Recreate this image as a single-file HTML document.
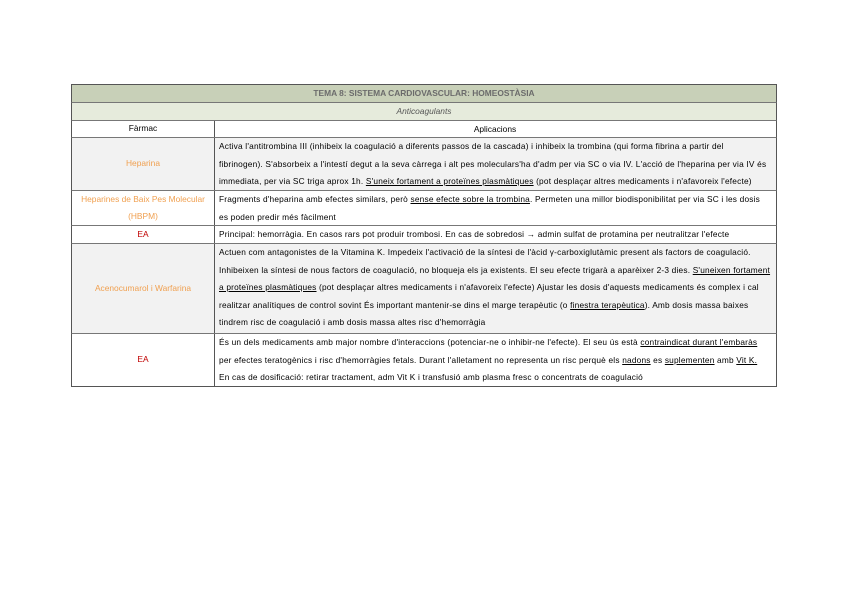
<!DOCTYPE html>
<html><head><meta charset="utf-8"><style>
body{margin:0;width:848px;height:599px;background:#fff;font-family:"Liberation Sans",sans-serif;position:relative;overflow:hidden}
.r{position:absolute;left:71px;width:706px;border-top:1px solid #777;border-left:1px solid #555;border-right:1px solid #555;box-sizing:border-box}
.c1{position:absolute;left:0;top:0;bottom:0;width:142px;border-right:1px solid #555;display:flex;align-items:center;justify-content:center;font-size:8.4px;text-align:center;line-height:17.5px}
.c2{position:absolute;left:147px;top:0;right:2px;font-size:8.3px;line-height:17.6px;color:#000;white-space:nowrap;letter-spacing:0.2px}
.o{color:#f0a050}.red{color:#c00000}
u{text-decoration:underline}
</style></head><body>
<div class="r" style="top:84px;height:18px;background:#c8d0b8;border-top:1px solid #555;font-size:8.4px;font-weight:bold;color:#6b6b6b;text-align:center;line-height:16px">TEMA 8: SISTEMA CARDIOVASCULAR: HOMEOSTÀSIA</div>
<div class="r" style="top:102px;height:18px;background:#e6ebdc;font-size:8.4px;font-style:italic;color:#555;text-align:center;line-height:16px">Anticoagulants</div>
<div class="r" style="top:120px;height:17px;background:#fff;font-size:8.4px;line-height:16px"><div class="c1">Fàrmac</div><div style="position:absolute;left:142px;right:0;text-align:center">Aplicacions</div></div>
<div class="r" style="top:137px;height:53px;background:#f2f2f2"><div class="c1 o">Heparina</div><div class="c2">Activa l'antitrombina III (inhibeix la coagulació a diferents passos de la cascada) i inhibeix la trombina (qui forma fibrina a partir del<br>fibrinogen). S'absorbeix a l'intestí degut a la seva càrrega i alt pes moleculars'ha d'adm per via SC o via IV. L'acció de l'heparina per via IV és<br>immediata, per via SC triga aprox 1h. <u>S'uneix fortament a proteïnes plasmàtiques</u> (pot desplaçar altres medicaments i n'afavoreix l'efecte)</div></div>
<div class="r" style="top:190px;height:35px;background:#fff"><div class="c1 o">Heparines de Baix Pes Molecular<br>(HBPM)</div><div class="c2">Fragments d'heparina amb efectes similars, però <u>sense efecte sobre la trombina</u>. Permeten una millor biodisponibilitat per via SC i les dosis<br>es poden predir més fàcilment</div></div>
<div class="r" style="top:225px;height:18px;background:#fff"><div class="c1 red">EA</div><div class="c2">Principal: hemorràgia. En casos rars pot produir trombosi. En cas de sobredosi → admin sulfat de protamina per neutralitzar l'efecte</div></div>
<div class="r" style="top:243px;height:90px;background:#f2f2f2"><div class="c1 o">Acenocumarol i Warfarina</div><div class="c2">Actuen com antagonistes de la Vitamina K. Impedeix l'activació de la síntesi de l'àcid γ-carboxiglutàmic present als factors de coagulació.<br>Inhibeixen la síntesi de nous factors de coagulació, no bloqueja els ja existents. El seu efecte trigarà a aparèixer 2-3 dies. <u>S'uneixen fortament</u><br><u>a proteïnes plasmàtiques</u> (pot desplaçar altres medicaments i n'afavoreix l'efecte) Ajustar les dosis d'aquests medicaments és complex i cal<br>realitzar analítiques de control sovint És important mantenir-se dins el marge terapèutic (o <u>finestra terapèutica</u>). Amb dosis massa baixes<br>tindrem risc de coagulació i amb dosis massa altes risc d'hemorràgia</div></div>
<div class="r" style="top:333px;height:54px;background:#fff;border-bottom:1px solid #555"><div class="c1 red">EA</div><div class="c2">És un dels medicaments amb major nombre d'interaccions (potenciar-ne o inhibir-ne l'efecte). El seu ús està <u>contraindicat durant l'embaràs</u><br>per efectes teratogènics i risc d'hemorràgies fetals. Durant l'alletament no representa un risc perquè els <u>nadons</u> es <u>suplementen</u> amb <u>Vit K.</u><br>En cas de dosificació: retirar tractament, adm Vit K i transfusió amb plasma fresc o concentrats de coagulació</div></div>
</body></html>
